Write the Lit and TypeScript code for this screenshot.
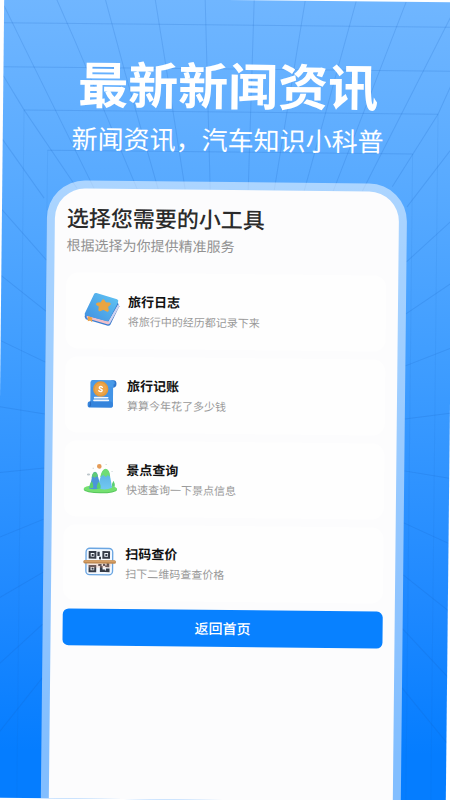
import { LitElement, html, svg, css } from "lit";
import { customElement } from "lit/decorators.js";

const bookIcon = svg`
  <svg class="icon" viewBox="27 38 108 108" aria-hidden="true">
    <defs>
      <linearGradient id="cover" x1="0" y1="1" x2="1" y2="0">
        <stop offset="0" stop-color="#3f8fe0" /><stop offset="1" stop-color="#62c6f4" />
      </linearGradient>
    </defs>
    <path d="M30 106 Q27 113 33 118 L99 137 Q104 138 107 133 L133 78 L128 66 Z" fill="#3a7fd2" />
    <path d="M35 107 L101 124 L130 72 L132 80 L105 130 L100 133 L36 115 Z" fill="#efbfc8" />
    <path d="M101 124 L130 72 L132 79 L104 130 Z" fill="#c9d6f6" />
    <path d="M57 42 Q59 38 64 39 L126 57 Q132 60 129 66 L103 119 Q100 125 94 123 L33 107 Q27 105 31 98 Z" fill="url(#cover)" />
    <path d="M39 109 L52 113 L52 127 L46 122 L39 124 Z" fill="#f0a445" />
    <path d="M86 60 L92 68 L104 69 Q107 71 104 74 L98 80 L100 91 Q99 95 95 92 L85 88 L75 92 Q71 92 72 88 L73 79 L65 74 Q64 70 68 69 L78 68 L83 60 Q85 58 86 60Z" fill="#eba542" stroke="#eba542" stroke-width="3" stroke-linejoin="round" />
  </svg>`;

const ledgerIcon = svg`
  <svg class="icon" viewBox="24 35 108 108" aria-hidden="true">
    <path d="M108 45 H116 Q124 46 124 56 Q124 68 112 68 Z" fill="#2f76cc" />
    <path d="M52 45 H112 Q120 46 119 57 H114 V124 H49 V118 L46 112 V52 Q46 46 52 45Z" fill="#4394e6" />
    <path d="M47 52 Q47 46 53 46 H108 Q116 47 116 55 V66 H47Z" fill="#4c9eea" opacity=".6" />
    <rect x="38" y="109" width="76" height="19" rx="8" fill="#3584dc" />
    <path d="M46 110 Q49 119 44 125" stroke="#2769bf" stroke-width="3" fill="none" />
    <circle cx="77" cy="72" r="23" fill="#e39a3c" />
    <circle cx="77" cy="72" r="18" fill="#eca64c" />
    <path d="M82 67 Q77 62 73 66 Q71 71 77 72 Q84 75 80 79 Q75 81 71 77" stroke="#fff" stroke-width="4" fill="none" stroke-linecap="round" />
    <path d="M59 98 H98 M57 106 H100" stroke="#f1f6fd" stroke-width="5" stroke-linecap="round" />
  </svg>`;

const sceneryIcon = svg`
  <svg class="icon" viewBox="21 32 108 108" aria-hidden="true">
    <defs>
      <linearGradient id="peak" x1="0" y1="0" x2="0" y2="1">
        <stop offset="0" stop-color="#5bcf87" /><stop offset=".4" stop-color="#62b9e8" /><stop offset="1" stop-color="#72c8f2" />
      </linearGradient>
    </defs>
    <ellipse cx="76" cy="119" rx="50" ry="11" fill="#57c65c" />
    <ellipse cx="76" cy="116" rx="50" ry="11" fill="#74e070" />
    <path d="M42 116 Q49 92 52 73 Q59 59 66 71 L78 113 Q60 121 42 116Z" fill="#4c94da" />
    <path d="M49 84 Q51 67 59 66 Q67 67 69 82 L64 79 L58 84 L54 79Z" fill="#5fcb77" />
    <path d="M67 114 Q75 83 80 67 Q91 47 101 65 Q106 82 111 113 Q88 123 67 114Z" fill="url(#peak)" />
    <path d="M75 82 Q80 57 91 56 Q103 57 105 80 L98 75 L92 81 L84 74Z" fill="#6fdd75" />
    <path d="M49 94 Q56 101 54 114 H44 Q42 104 49 94Z M71 95 Q79 105 76 116 H66 Q63 105 71 95Z M115 92 Q121 102 119 110 H111 Q109 101 115 92Z" fill="#5bcf70" />
    <circle cx="72" cy="49" r="7" fill="#e59b57" />
    <ellipse cx="40" cy="74" rx="5" ry="3" fill="#bdc6cb" />
    <path d="M52 55 h4 M91 43 h3 M109 64 h3" stroke="#c8d2d6" stroke-width="3" />
  </svg>`;

const scanIcon = svg`
  <svg class="icon" viewBox="19 29 108 108" aria-hidden="true">
    <rect x="33" y="40" width="80" height="79" rx="11" fill="#f4f9ff" stroke="#6ba6e2" stroke-width="4" />
    <g fill="none" stroke="#353b47" stroke-width="6">
      <rect x="44" y="51" width="17" height="17" />
      <rect x="85" y="51" width="17" height="17" />
      <rect x="44" y="93" width="17" height="16" />
    </g>
    <path d="M50 57 h6 v6 h-6Z M91 57 h6 v6 h-6Z M50 98 h6 v6 h-6Z M67 50 h7 v13 h-7Z M72 65 h6 v8 h-6Z M70 87 h10 v6 h-10Z M75 93 h8 v10 h7 v8 h-15Z M84 86 h7 v7 h-7Z M95 84 h8 v12 h-12 v-5 h4Z M93 100 h11 v11 h-14 v-5 h3Z" fill="#353b47" />
    <path d="M36 87 H110 L105 98 H41Z" fill="#f2a987" opacity=".3" />
    <rect x="25" y="75" width="98" height="11" rx="5" fill="#c08a52" />
    <rect x="28" y="76" width="92" height="5" rx="2" fill="#d6a066" />
  </svg>`;

const tools = [
  { icon: bookIcon, name: "旅行日志", note: "将旅行中的经历都记录下来" },
  { icon: ledgerIcon, name: "旅行记账", note: "算算今年花了多少钱" },
  { icon: sceneryIcon, name: "景点查询", note: "快速查询一下景点信息" },
  { icon: scanIcon, name: "扫码查价", note: "扫下二维码查查价格" },
];

@customElement("app-root")
export class AppRoot extends LitElement {
  static styles = css`
    :host {
      display: block;
      overflow: hidden;
      background: #fff;
      font-family: "Noto Sans CJK SC", "Noto Sans", sans-serif;
    }
    .poster {
      position: relative;
      box-sizing: border-box;
      min-height: 100vh;
      display: flex;
      flex-direction: column;
      align-items: center;
      padding-top: 54px;
      background: linear-gradient(#70b6ff 0%, #58aaff 23%, #3f9dff 45%, #1f89ff 75%, #057dff 94%);
      transform: rotate(0.6deg);
    }
    .grid {
      position: absolute;
      inset: 0;
      width: 100%;
      height: 100%;
      fill: none;
      stroke: #1461bd;
      stroke-opacity: 0.18;
    }
    .walls {
      stroke-opacity: 0.09;
    }
    .banner {
      position: relative;
      text-align: center;
      color: #fff;
      margin-bottom: 22px;
      font-family: "Liberation Sans", "Noto Sans CJK SC", sans-serif;
    }
    .banner h1 {
      margin: 0;
      font-size: 50px;
      line-height: 68px;
      font-weight: 700;
    }
    .banner p {
      margin: 0;
      font-size: 26px;
      line-height: 38px;
      font-weight: 400;
    }
    .frame {
      position: relative;
      box-sizing: border-box;
      width: 80%;
      flex: 1;
      display: flex;
      padding: 8px 8px 0;
      border-radius: 38px 38px 0 0;
      background: rgba(255, 255, 255, 0.5);
    }
    .screen {
      flex: 1;
      padding: 14px 12px;
      border-radius: 30px 30px 0 0;
      background: #fcfcfd;
    }
    .screen h2 {
      margin: 0 0 2px;
      font-size: 22px;
      line-height: 28px;
      font-weight: 500;
      color: #2b2b2b;
    }
    .lead {
      margin: 0 0 16px;
      font-size: 14px;
      line-height: 24px;
      color: #929292;
    }
    .tools {
      list-style: none;
      margin: 0 0 8px;
      padding: 0;
      display: grid;
      gap: 8px;
    }
    .tool {
      display: flex;
      align-items: center;
      gap: 8px;
      height: 76px;
      padding: 0 18px;
      border-radius: 12px;
      background: #fefefe;
      color: inherit;
      text-decoration: none;
    }
    .icon {
      width: 36px;
      height: 36px;
      flex: none;
    }
    .name,
    .note {
      display: block;
    }
    .name {
      font-size: 13px;
      line-height: 20px;
      font-weight: 700;
      color: #111;
    }
    .note {
      font-size: 11px;
      line-height: 18px;
      color: #999;
    }
    .back {
      display: block;
      width: 100%;
      height: 37px;
      padding: 0 0 2px;
      border: 0;
      border-radius: 6px;
      background: #0881ff;
      color: #fff;
      font: 500 14px "Noto Sans CJK SC", sans-serif;
    }
  `;

  render() {
    return html`
      <main class="poster">
        <svg class="grid" viewBox="0 0 450 800" preserveAspectRatio="none" aria-hidden="true">
          <path d="M0 25H450M0 69H450M21 112H435M45 152H410" />
          <path d="M0 8L21 50L92 190M52 0L71 42L135 190M101 0L122 75L156 190M151 0L163 70L183 190M201 0L208 190M250 0L246 190M301 0L272 190M352 0L302 190M402 0L331 190M450 8L360 190" />
          <path d="M0 78L21 112L75 190M0 142L42 200M450 78L435 112L390 185M450 145L405 205" />
          <path class="walls" d="M21 112V800M45 152V800M435 112V800M410 152V800" />
          <path d="M0 212L45 262M0 278L45 313M0 343L45 364M0 409L45 416M0 475L45 470M0 540L45 521M0 601L45 574M0 668L45 626M0 738L45 680" />
          <path d="M450 218L405 260M450 281L405 312M450 346L405 364M450 411L405 417M450 476L405 469M450 541L405 521M450 608L405 573M450 674L405 627M450 740L405 686" />
        </svg>
        <header class="banner">
          <h1>最新新闻资讯</h1>
          <p>新闻资讯，汽车知识小科普</p>
        </header>
        <div class="frame">
          <section class="screen">
            <h2>选择您需要的小工具</h2>
            <p class="lead">根据选择为你提供精准服务</p>
            <ul class="tools">
              ${tools.map(
                (t) => html`<li>
                  <a class="tool" href="#">
                    ${t.icon}
                    <span><span class="name">${t.name}</span><span class="note">${t.note}</span></span>
                  </a>
                </li>`
              )}
            </ul>
            <button class="back" type="button">返回首页</button>
          </section>
        </div>
      </main>
    `;
  }
}
